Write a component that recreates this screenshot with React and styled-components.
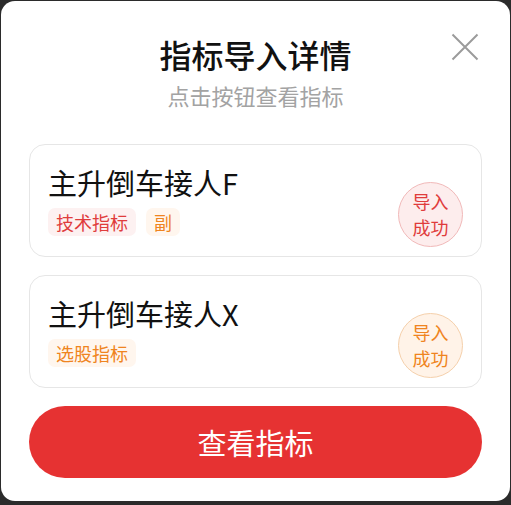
import React from 'react';
import styled, { createGlobalStyle } from 'styled-components';

const Global = createGlobalStyle`
  html, body {
    margin: 0;
    padding: 0;
    background: #2b2b2b;
    font-family: "Noto Sans CJK SC", "Noto Sans", sans-serif;
  }
`

const Dialog = styled.div`
  position: relative;
  margin: 1px;
  height: 500px;
  box-sizing: border-box;
  background: #fff;
  border-radius: 14px;
  padding: 33px 28px 0 28px;
  display: flex;
  flex-direction: column;
`

const Header = styled.div`
  display: flex;
  flex-direction: column;
  align-items: center;
  gap: 7px;
  margin-bottom: 35px;
`

const Title = styled.h1`
  margin: 0;
  font-size: 32px;
  line-height: 40px;
  font-weight: 500;
  color: #111;
`

const Subtitle = styled.p`
  margin: 0;
  font-size: 22px;
  line-height: 28px;
  color: #a3a3a3;
`

const Close = styled.button`
  position: absolute;
  top: 32px;
  right: 31px;
  width: 28px;
  height: 28px;
  padding: 0;
  border: none;
  background: none;
  cursor: pointer;
`

const List = styled.div`
  display: flex;
  flex-direction: column;
  gap: 18px;
`

const Card = styled.div`
  display: flex;
  align-items: center;
  justify-content: space-between;
  height: 113px;
  box-sizing: border-box;
  border: 1px solid #e6e6e6;
  border-radius: 16px;
  padding: 19px 18px 0 18px;
`

const CardText = styled.div`
  display: flex;
  flex-direction: column;
  align-self: flex-start;
  gap: 8px;
`

const CardTitle = styled.div`
  font-size: 29px;
  line-height: 36px;
  color: #111;
`

const Tags = styled.div`
  display: flex;
  gap: 10px;
`

const palette = {
  red: { fg: '#e03c3c', bg: '#fdf1f1', border: '#f1b9b9', soft: '#fdeded' },
  orange: { fg: '#ef8420', bg: '#fff6ee', border: '#f5d0ab', soft: '#fff3e8' },
}

const Tag = styled.span`
  display: inline-flex;
  align-items: center;
  height: 28px;
  padding: 0 8px;
  border-radius: 7px;
  font-size: 18px;
  color: ${p => palette[p.$tone].fg};
  background: ${p => palette[p.$tone].bg};
`

const Badge = styled.div`
  width: 65px;
  height: 65px;
  margin-top: 8px;
  border-radius: 50%;
  box-sizing: border-box;
  border: 1px solid ${p => palette[p.$tone].border};
  background: ${p => palette[p.$tone].soft};
  color: ${p => palette[p.$tone].fg};
  display: flex;
  align-items: center;
  justify-content: center;
  text-align: center;
  font-size: 18px;
  line-height: 26px;
`

const Action = styled.button`
  margin-top: 18px;
  height: 72px;
  border: none;
  border-radius: 36px;
  background: #e63232;
  color: #fff;
  font-family: inherit;
  font-size: 29px;
  cursor: pointer;
`

const items = [
  { name: '主升倒车接人F', tone: 'red', tags: [{ text: '技术指标', tone: 'red' }, { text: '副', tone: 'orange' }] },
  { name: '主升倒车接人X', tone: 'orange', tags: [{ text: '选股指标', tone: 'orange' }] },
]

const App = () => {
  return (
    <>
      <Global />
      <Dialog>
        <Header>
          <Title>指标导入详情</Title>
          <Subtitle>点击按钮查看指标</Subtitle>
        </Header>
        <Close aria-label="关闭">
          <svg width="28" height="28" viewBox="0 0 28 28">
            <path d="M1.5 1.5 L26.5 26.5 M26.5 1.5 L1.5 26.5" stroke="#9b9b9b" strokeWidth="2" fill="none" />
          </svg>
        </Close>
        <List>
          {items.map(item => (
            <Card key={item.name}>
              <CardText>
                <CardTitle>{item.name}</CardTitle>
                <Tags>
                  {item.tags.map(t => (
                    <Tag key={t.text} $tone={t.tone}>{t.text}</Tag>
                  ))}
                </Tags>
              </CardText>
              <Badge $tone={item.tone}>导入<br />成功</Badge>
            </Card>
          ))}
        </List>
        <Action>查看指标</Action>
      </Dialog>
    </>
  );
};

export default App;
